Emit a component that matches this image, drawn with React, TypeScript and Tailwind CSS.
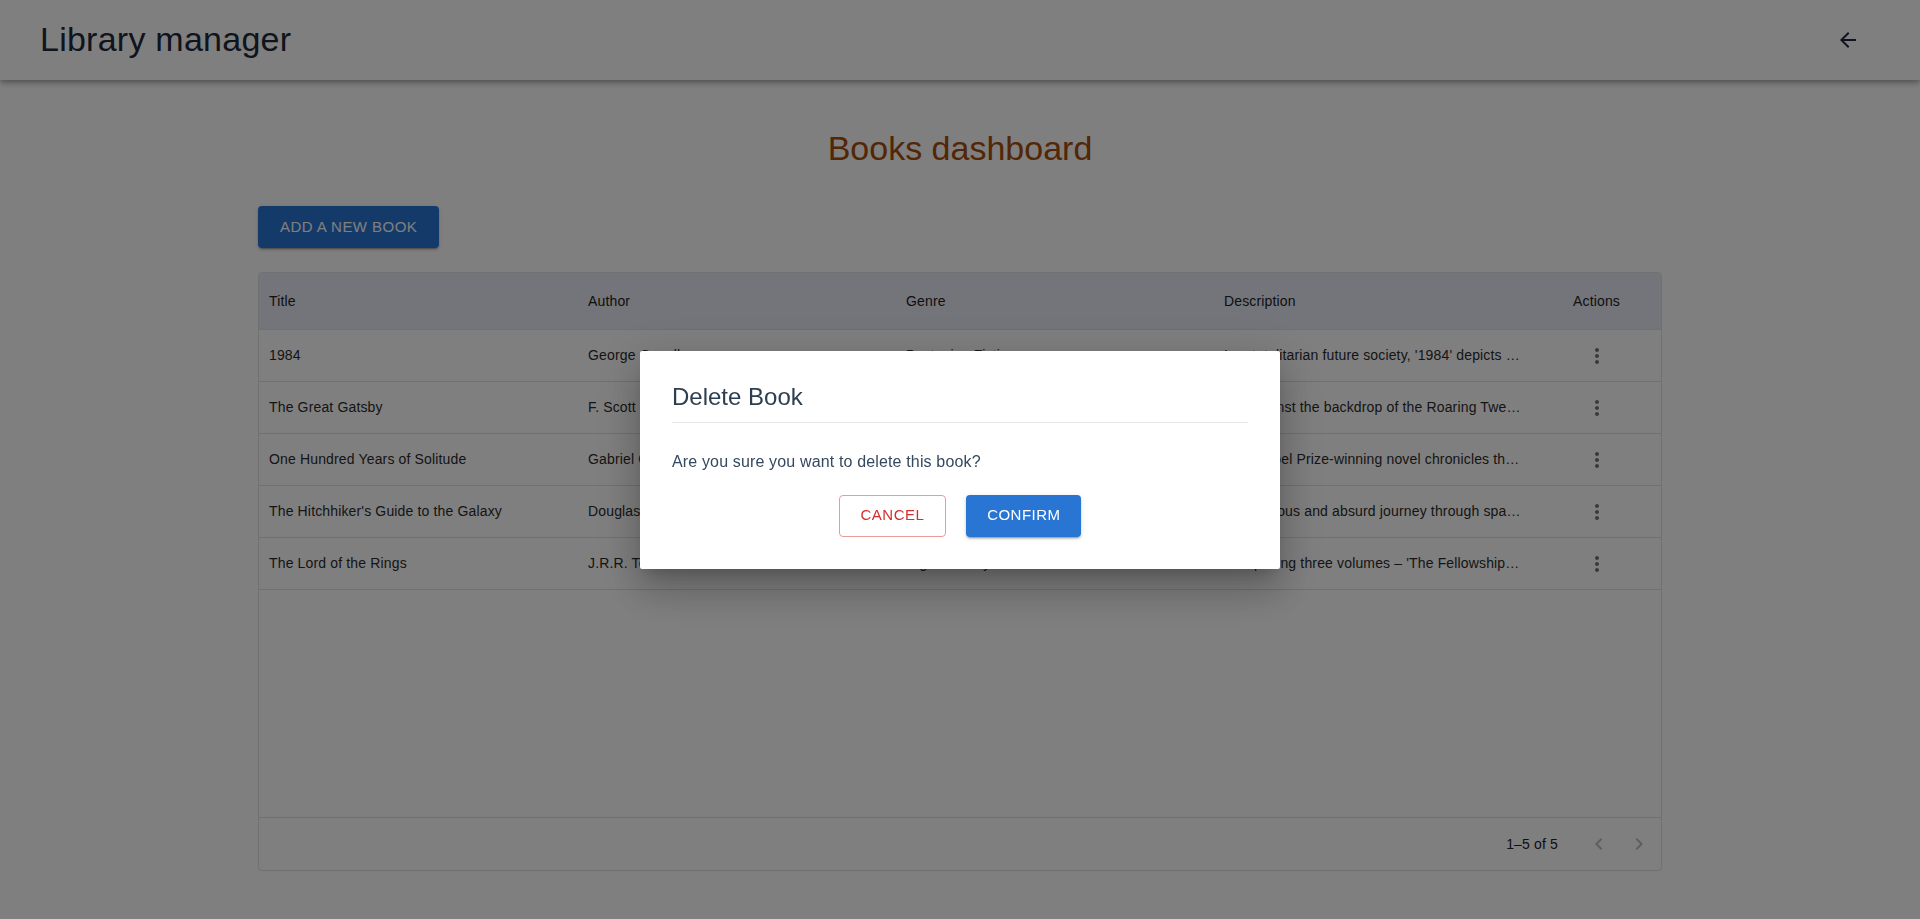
import React from "react";

const books = [
  {
    title: "1984",
    author: "George Orwell",
    genre: "Dystopian Fiction",
    description:
      "In a totalitarian future society, '1984' depicts a world of perpetual war, omnipresent surveillance and propaganda.",
  },
  {
    title: "The Great Gatsby",
    author: "F. Scott Fitzgerald",
    genre: "Tragedy",
    description:
      "Set against the backdrop of the Roaring Twenties, the novel follows the mysterious millionaire Jay Gatsby.",
  },
  {
    title: "One Hundred Years of Solitude",
    author: "Gabriel García Márquez",
    genre: "Magical Realism",
    description:
      "This Nobel Prize-winning novel chronicles the multi-generational story of the Buendía family.",
  },
  {
    title: "The Hitchhiker's Guide to the Galaxy",
    author: "Douglas Adams",
    genre: "Science Fiction",
    description:
      "A humorous and absurd journey through space following Arthur Dent after the destruction of Earth.",
  },
  {
    title: "The Lord of the Rings",
    author: "J.R.R. Tolkien",
    genre: "High Fantasy",
    description:
      "Comprising three volumes – 'The Fellowship of the Ring', 'The Two Towers' and 'The Return of the King'.",
  },
];

const font = { fontFamily: '"Liberation Sans", Arial, Helvetica, sans-serif' };

function MoreVert() {
  return (
    <svg width="24" height="24" viewBox="0 0 24 24" fill="#757575">
      <path d="M12 8c1.1 0 2-.9 2-2s-.9-2-2-2-2 .9-2 2 .9 2 2 2zm0 2c-1.1 0-2 .9-2 2s.9 2 2 2 2-.9 2-2-.9-2-2-2zm0 6c-1.1 0-2 .9-2 2s.9 2 2 2 2-.9 2-2-.9-2-2-2z" />
    </svg>
  );
}

export default function App() {
  return (
    <div className="relative min-h-[919px] w-full bg-white font-['Liberation_Sans',Arial,sans-serif]" style={font}>
      {/* Header */}
      <header className="flex h-[80px] items-center justify-between bg-white pl-10 pr-[60px] pb-[2px] shadow-[0_2px_4px_-1px_rgba(0,0,0,0.2),0_4px_5px_0_rgba(0,0,0,0.14),0_1px_10px_0_rgba(0,0,0,0.12)]">
        <h1 className="text-[34px] leading-[40px] tracking-[0.25px] text-[#1e293b]">Library manager</h1>
        <svg width="24" height="24" viewBox="0 0 24 24" fill="#1e293b" className="mt-[2px]">
          <path d="M20 11H7.83l5.59-5.59L12 4l-8 8 8 8 1.41-1.41L7.83 13H20v-2z" />
        </svg>
      </header>

      {/* Main content */}
      <main className="mx-auto w-[1404px]">
        <h2 className="mt-[47px] text-center text-[34px] leading-[42px] text-[#a64d0c]">Books dashboard</h2>

        <button className="mt-[37px] h-[42px] rounded-[4px] bg-[#2875d3] px-[22px] text-[15px] uppercase tracking-[0.46px] text-white shadow-[0_3px_1px_-2px_rgba(0,0,0,0.2),0_2px_2px_0_rgba(0,0,0,0.14),0_1px_5px_0_rgba(0,0,0,0.12)]">
          Add a new book
        </button>

        <div className="mt-[24px] flex h-[599px] flex-col overflow-hidden rounded-[4px] border border-[#e0e0e0] text-[14px] tracking-[0.15px]">
          <div className="grid h-[57px] shrink-0 grid-cols-[319px_318px_318px_318px_1fr] items-center border-b border-[#e0e0e0] bg-[#e8eaf6] text-[#212121]">
            <div className="px-[10px]">Title</div>
            <div className="px-[10px]">Author</div>
            <div className="px-[10px]">Genre</div>
            <div className="px-[10px]">Description</div>
            <div className="px-[10px] text-center">Actions</div>
          </div>
          {books.map((b) => (
            <div
              key={b.title}
              className="grid h-[52px] shrink-0 grid-cols-[319px_318px_318px_318px_1fr] items-center border-b border-[#e0e0e0] text-[#2b2b2b]"
            >
              <div className="truncate px-[10px]">{b.title}</div>
              <div className="truncate px-[10px]">{b.author}</div>
              <div className="truncate px-[10px]">{b.genre}</div>
              <div className="truncate px-[10px]">{b.description}</div>
              <div className="flex justify-center">
                <MoreVert />
              </div>
            </div>
          ))}
          <div className="flex-1" />
          <div className="flex h-[53px] shrink-0 items-center justify-end border-t border-[#e0e0e0] pr-[2px] text-[#212121]">
            <span className="text-[14px]">1–5 of 5</span>
            <div className="ml-[21px] flex">
              <div className="flex h-[40px] w-[40px] items-center justify-center">
                <svg width="24" height="24" viewBox="0 0 24 24" fill="#bdbdbd">
                  <path d="M15.41 16.59L10.83 12l4.58-4.59L14 6l-6 6 6 6 1.41-1.41z" />
                </svg>
              </div>
              <div className="flex h-[40px] w-[40px] items-center justify-center">
                <svg width="24" height="24" viewBox="0 0 24 24" fill="#bdbdbd">
                  <path d="M8.59 16.59L13.17 12 8.59 7.41 10 6l6 6-6 6-1.41-1.41z" />
                </svg>
              </div>
            </div>
          </div>
        </div>
      </main>

      {/* Backdrop */}
      <div className="fixed inset-0 bg-black/50" />

      {/* Dialog */}
      <div className="fixed inset-0 flex items-center justify-center">
        <div className="w-[640px] rounded-[2px] bg-white px-8 pt-8 pb-8 shadow-[0_11px_15px_-7px_rgba(0,0,0,0.2),0_24px_38px_3px_rgba(0,0,0,0.14),0_9px_46px_8px_rgba(0,0,0,0.12)]">
          <h3 className="border-b border-[#e8e8e8] pb-[11px] text-[24px] leading-[28px] text-[#2c3e50]">Delete Book</h3>
          <p className="mt-[27px] text-[16px] leading-[24px] tracking-[0.15px] text-[#34495e]">
            Are you sure you want to delete this book?
          </p>
          <div className="mt-[21px] flex justify-center gap-[20px]">
            <button className="h-[42px] rounded-[4px] border border-[#eb9a9a] px-[21px] text-[15px] uppercase tracking-[0.46px] text-[#d32f2f]">
              Cancel
            </button>
            <button className="h-[42px] rounded-[4px] bg-[#2875d3] px-[21px] text-[15px] uppercase tracking-[0.46px] text-white shadow-[0_3px_1px_-2px_rgba(0,0,0,0.2),0_2px_2px_0_rgba(0,0,0,0.14),0_1px_5px_0_rgba(0,0,0,0.12)]">
              Confirm
            </button>
          </div>
        </div>
      </div>
    </div>
  );
}
